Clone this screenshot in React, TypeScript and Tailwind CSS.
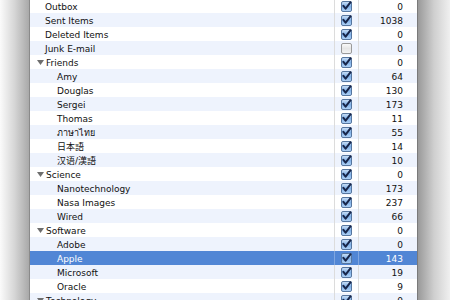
import React from "react";

type Row = {
  name: string;
  level: number;
  group?: boolean;
  checked: boolean;
  count: number;
};

const rows: Row[] = [
  { name: "Outbox", level: 1, checked: true, count: 0 },
  { name: "Sent Items", level: 1, checked: true, count: 1038 },
  { name: "Deleted Items", level: 1, checked: true, count: 0 },
  { name: "Junk E-mail", level: 1, checked: false, count: 0 },
  { name: "Friends", level: 0, group: true, checked: true, count: 0 },
  { name: "Amy", level: 2, checked: true, count: 64 },
  { name: "Douglas", level: 2, checked: true, count: 130 },
  { name: "Sergei", level: 2, checked: true, count: 173 },
  { name: "Thomas", level: 2, checked: true, count: 11 },
  { name: "ภาษาไทย", level: 2, checked: true, count: 55 },
  { name: "日本語", level: 2, checked: true, count: 14 },
  { name: "汉语/漢語", level: 2, checked: true, count: 10 },
  { name: "Science", level: 0, group: true, checked: true, count: 0 },
  { name: "Nanotechnology", level: 2, checked: true, count: 173 },
  { name: "Nasa Images", level: 2, checked: true, count: 237 },
  { name: "Wired", level: 2, checked: true, count: 66 },
  { name: "Software", level: 0, group: true, checked: true, count: 0 },
  { name: "Adobe", level: 2, checked: true, count: 0 },
  { name: "Apple", level: 2, checked: true, count: 143 },
  { name: "Microsoft", level: 2, checked: true, count: 19 },
  { name: "Oracle", level: 2, checked: true, count: 9 },
  { name: "Technology", level: 0, group: true, checked: true, count: 0 },
];

const SELECTED = 18;

const CheckBox = ({ checked, id }: { checked: boolean; id: number }) => (
  <svg width="11" height="11" viewBox="0 0 11 11">
    <defs>
      <linearGradient id={`cb${id}`} x1="0" y1="0" x2="0" y2="1">
        {checked ? (
          <>
            <stop offset="0" stopColor="#cfe2f7" />
            <stop offset="0.5" stopColor="#7fb0e8" />
            <stop offset="1" stopColor="#b3d4f7" />
          </>
        ) : (
          <>
            <stop offset="0" stopColor="#fbfbfb" />
            <stop offset="0.5" stopColor="#e6e6e6" />
            <stop offset="1" stopColor="#f4f4f4" />
          </>
        )}
      </linearGradient>
    </defs>
    <rect
      x="0.5"
      y="0.5"
      width="10"
      height="10"
      rx="1.5"
      fill={`url(#cb${id})`}
      stroke={checked ? "#56769f" : "#9a9a9a"}
    />
    {checked && (
      <path
        d="M2.4 4.8 L4.6 7.6 L9.6 1.2"
        fill="none"
        stroke="#18264a"
        strokeWidth="2"
        strokeLinecap="round"
        strokeLinejoin="round"
      />
    )}
  </svg>
);

export default function App() {
  return (
    <div
      className="w-[450px] h-[300px] overflow-hidden flex bg-white"
      style={{ fontFamily: '"DejaVu Sans", "Noto Sans", "Noto Sans CJK JP", sans-serif' }}
    >
      <div className="w-[30px] shrink-0 bg-gradient-to-r from-[#fbfbfb] via-[#d6d6d6] to-[#a9a9a9] border-r border-[#8a8a8a]" />
      <div className="flex-1 flex flex-col -mt-[1px]">
        {rows.map((r, i) => {
          const sel = i === SELECTED;
          const bg = sel ? "bg-[#5186d5]" : i % 2 === 1 ? "bg-[#eef3fd]" : "bg-white";
          const line = sel ? "border-[#7fa6e0]" : "border-[#dcdcdc]";
          return (
            <div key={i} className={`flex h-[14px] shrink-0 ${bg} ${sel ? "text-white" : "text-[#111]"}`}>
              <div
                className={`w-[305px] shrink-0 flex items-center border-r ${line} ${
                  r.level === 2 ? "pl-[27px]" : r.level === 1 ? "pl-[15px]" : "pl-[7px]"
                }`}
              >
                {r.group && (
                  <svg width="8" height="7" viewBox="0 0 8 7" className="mr-[1px] mt-[1px] shrink-0">
                    <path d="M0 1 L7 1 L3.5 6 Z" fill="#6e6e6e" />
                  </svg>
                )}
                <span className="text-[9px] leading-[14px] pt-[2px] whitespace-nowrap">{r.name}</span>
              </div>
              <div className={`w-[24px] shrink-0 flex items-center justify-center border-r ${line}`}>
                <CheckBox checked={r.checked} id={i} />
              </div>
              <div className="flex-1 flex items-center justify-end pr-[14px]">
                <span className="text-[9px] leading-[14px] pt-[2px]">{r.count}</span>
              </div>
            </div>
          );
        })}
      </div>
      <div className="w-[33px] shrink-0 bg-gradient-to-r from-[#9a9a9a] via-[#cfcfcf] to-[#f0f0f0] border-l border-[#7a7a7a]" />
    </div>
  );
}
